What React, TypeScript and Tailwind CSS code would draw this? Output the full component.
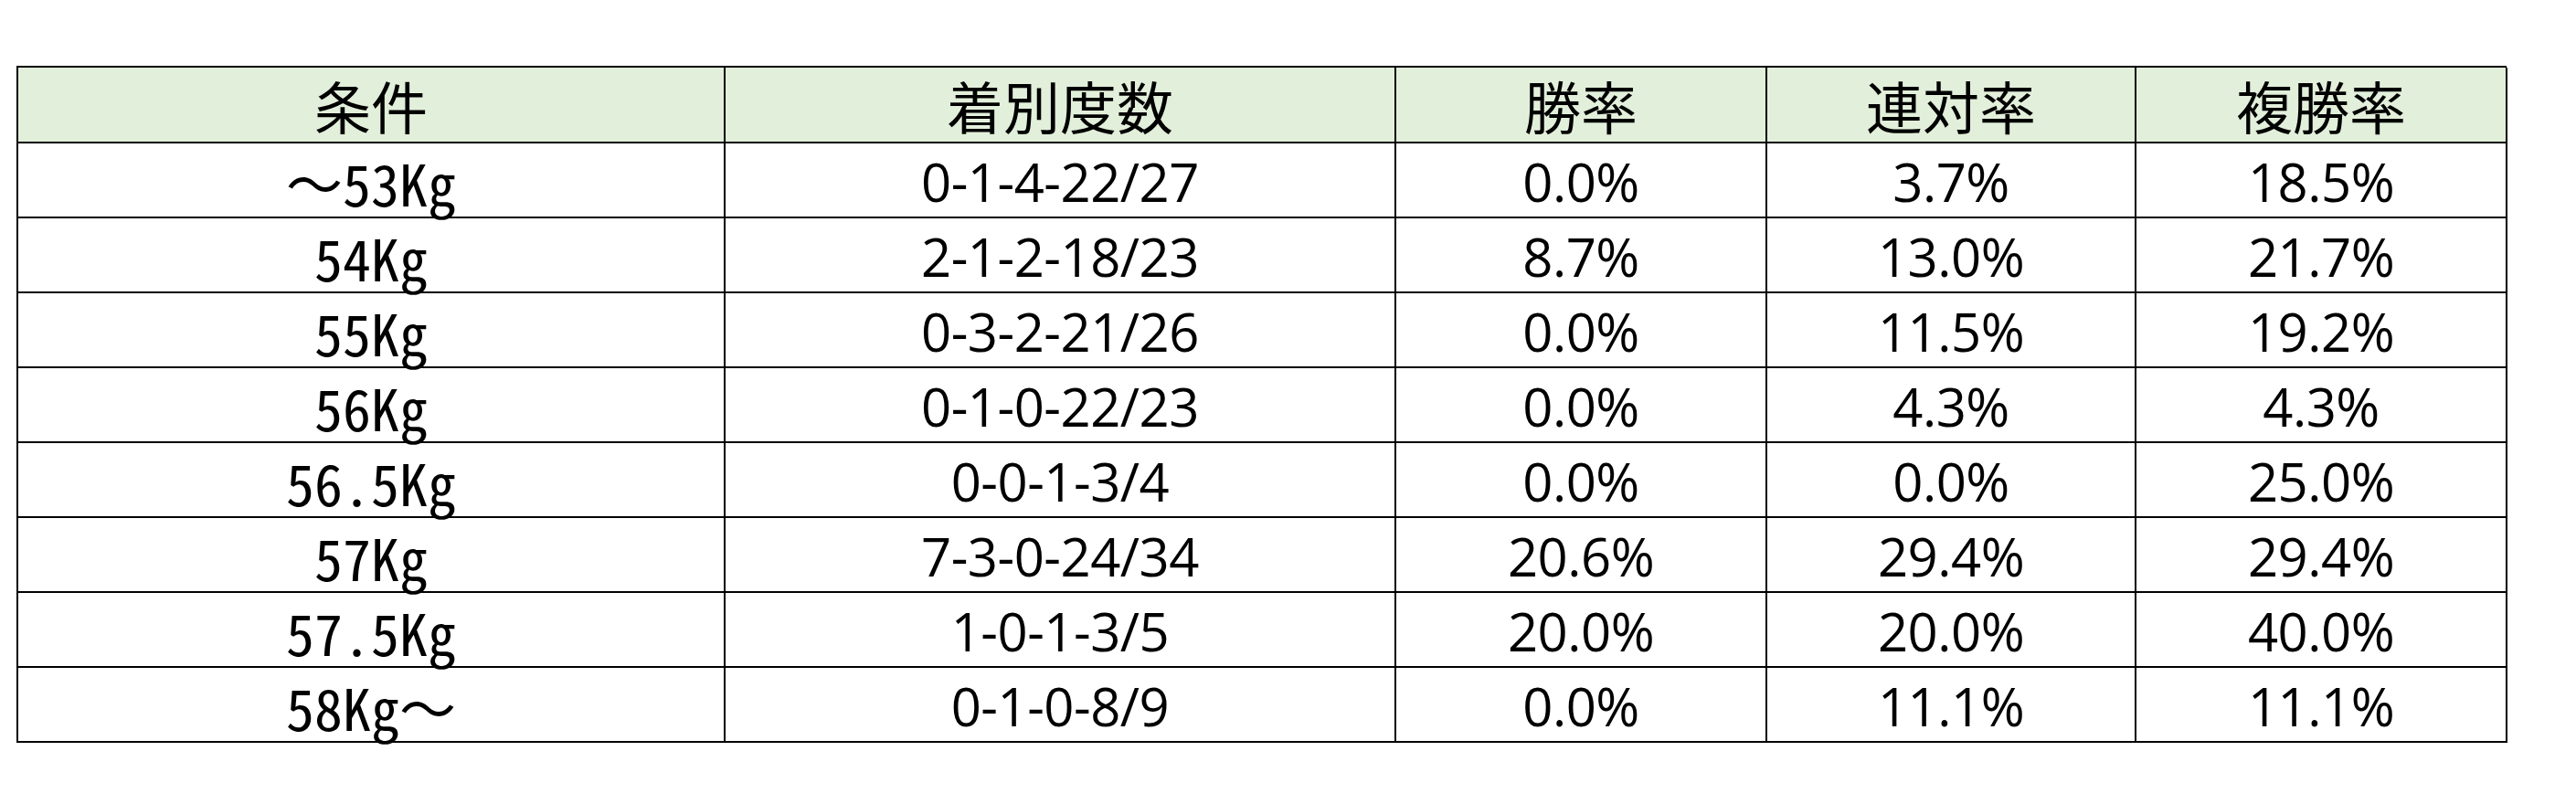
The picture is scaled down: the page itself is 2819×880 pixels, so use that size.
const headers = ['条件', '着別度数', '勝率', '連対率', '複勝率']

const rows: [string, string, string, string, string][] = [
    ['～53Kg', '0-1-4-22/27', '0.0%', '3.7%', '18.5%'],
    ['54Kg', '2-1-2-18/23', '8.7%', '13.0%', '21.7%'],
    ['55Kg', '0-3-2-21/26', '0.0%', '11.5%', '19.2%'],
    ['56Kg', '0-1-0-22/23', '0.0%', '4.3%', '4.3%'],
    ['56.5Kg', '0-0-1-3/4', '0.0%', '0.0%', '25.0%'],
    ['57Kg', '7-3-0-24/34', '20.6%', '29.4%', '29.4%'],
    ['57.5Kg', '1-0-1-3/5', '20.0%', '20.0%', '40.0%'],
    ['58Kg～', '0-1-0-8/9', '0.0%', '11.1%', '11.1%'],
]

// half-width latin, but keep the full-width wave dash
function Weight({ text }: { text: string }) {
    return (
        <>
            {text.split(/(～)/).map((part, i) =>
                part === '～' ? (
                    <span key={i} className="[font-feature-settings:normal]">
                        ～
                    </span>
                ) : (
                    <span key={i}>{part}</span>
                )
            )}
        </>
    )
}

export default function App() {
    return (
        <div className="min-h-[880px] w-[2819px] bg-white pt-[72px] pl-[18px]">
            <div className="grid w-[2725px] grid-cols-[774px_734px_406px_404px_406px] border-t-2 border-l-2 border-black">
                {headers.map((h) => (
                    <div
                        key={h}
                        className="flex h-[83px] items-center justify-center border-r-2 border-b-2 border-black bg-[#e2efda] font-['Noto_Sans_CJK_JP',sans-serif] text-[62px] leading-none text-black"
                    >
                        {h}
                    </div>
                ))}
                {rows.map((r) =>
                    r.map((cell, i) =>
                        i === 0 ? (
                            <div
                                key={r[0] + i}
                                className="flex h-[82px] items-center justify-center border-r-2 border-b-2 border-black pt-[4px] font-['Noto_Sans_CJK_JP',sans-serif] text-[62px] leading-none text-black [font-feature-settings:'hwid']"
                            >
                                <Weight text={cell} />
                            </div>
                        ) : (
                            <div
                                key={r[0] + i}
                                className="flex h-[82px] items-center justify-center border-r-2 border-b-2 border-black pt-[4px] font-['Open_Sans',sans-serif] text-[58px] leading-none tracking-[-0.5px] text-black"
                            >
                                {cell}
                            </div>
                        )
                    )
                )}
            </div>
        </div>
    )
}
